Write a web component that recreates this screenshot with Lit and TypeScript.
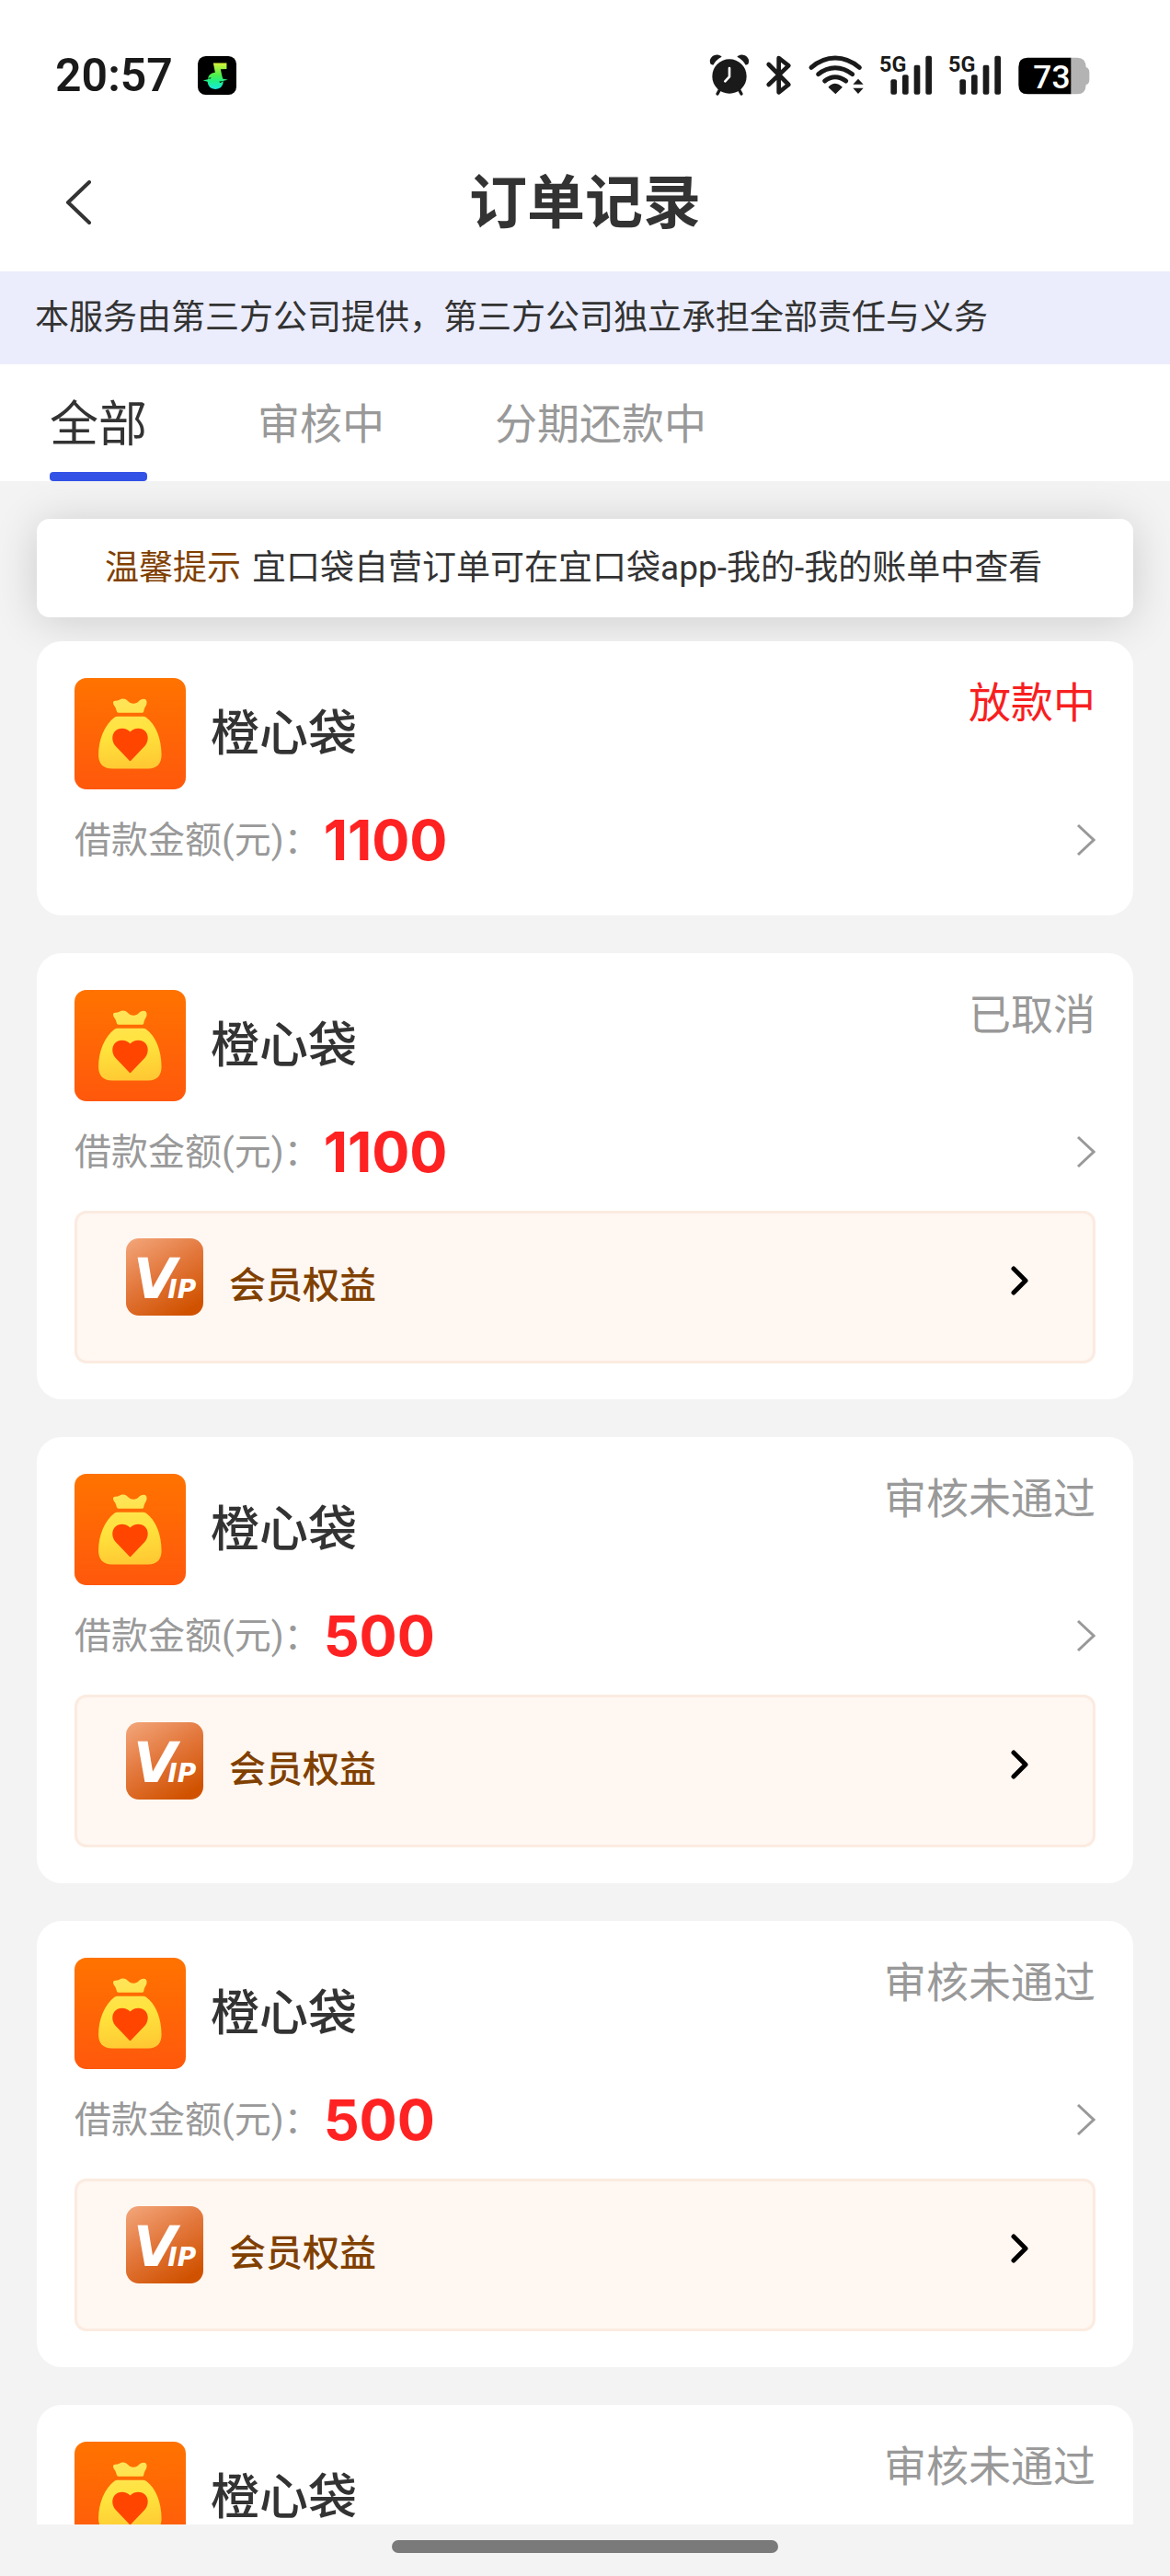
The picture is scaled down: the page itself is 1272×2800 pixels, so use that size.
import { LitElement, html, css, nothing } from "lit";
import { customElement, property, state } from "lit/decorators.js";
import { classMap } from "lit/directives/class-map.js";

interface Order {
  name: string;
  status: string;
  active: boolean;
  amount: number;
  benefit: boolean;
}

const ORDERS: Order[] = [
  { name: "橙心袋", status: "放款中", active: true, amount: 1100, benefit: false },
  { name: "橙心袋", status: "已取消", active: false, amount: 1100, benefit: true },
  { name: "橙心袋", status: "审核未通过", active: false, amount: 500, benefit: true },
  { name: "橙心袋", status: "审核未通过", active: false, amount: 500, benefit: true },
  { name: "橙心袋", status: "审核未通过", active: false, amount: 500, benefit: true },
];

const TABS = ["全部", "审核中", "分期还款中"];

@customElement("status-bar")
export class StatusBar extends LitElement {
  static styles = css`
    :host {
      display: block;
    }
    .bar {
      display: flex;
      align-items: center;
      justify-content: space-between;
      box-sizing: border-box;
      height: 146px;
      padding: 18px 87px 0 60px;
      color: #1a1a1a;
    }
    .left {
      display: flex;
      align-items: center;
      gap: 27px;
    }
    .right {
      display: flex;
      align-items: center;
      gap: 18px;
    }
    .time {
      font: 600 50px/56px "Roboto", sans-serif;
    }
    svg {
      display: block;
      overflow: visible;
      fill: currentColor;
    }
    .music {
      width: 42px;
      height: 42px;
    }
    .icon {
      height: 46px;
    }
    .net {
      font: 700 70px "Roboto", sans-serif;
    }
    .level {
      font: 500 106px "Roboto", sans-serif;
      fill: #fff;
    }
  `;

  private signal() {
    return html`<svg class="icon" width="57" viewBox="649 88 171 138" aria-hidden="true">
      <text class="net" x="646" y="145">5G</text>
      <rect x="683" y="170" width="20" height="49" rx="6" />
      <rect x="721" y="155" width="20" height="64" rx="6" />
      <rect x="759" y="123" width="20" height="96" rx="6" />
      <rect x="797" y="93" width="20" height="126" rx="6" />
    </svg>`;
  }

  render() {
    return html`<div class="bar">
      <div class="left">
        <span class="time">20:57</span>
        <svg class="music" viewBox="642 94 127 127" aria-hidden="true">
          <defs>
            <linearGradient id="note" x1="0" y1="0" x2="0" y2="1">
              <stop offset="0" stop-color="#d8f23a" />
              <stop offset=".45" stop-color="#4ef04a" />
              <stop offset=".7" stop-color="#1ff08a" />
              <stop offset="1" stop-color="#19e8e0" />
            </linearGradient>
          </defs>
          <rect x="642" y="94" width="127" height="127" rx="26" fill="#000" />
          <path
            fill="url(#note)"
            d="M693 117 L737 117 L737 136 L717 137 L724 168 L741 172 L727 175 Q724 202 700 203 Q676 201 674 178 L659 174 L675 170 Q677 150 699 148 Z"
          />
          <path d="M672 167 L686 164 L684 168 Z M712 178 L728 176 L716 182 Z" fill="#000" />
        </svg>
      </div>
      <div class="right">
        <svg class="icon" width="44" viewBox="92 88 132 138" aria-hidden="true">
          <circle cx="158" cy="160" r="56" />
          <path d="M105 123 L97 120 C88 104 104 88 122 90 Q130 91 133 96 Q114 106 105 123 Z" />
          <path d="M211 123 L219 120 C228 104 212 88 194 90 Q186 91 183 96 Q202 106 211 123 Z" />
          <path
            d="M126 204 L119 217 M190 204 L197 217"
            stroke="currentColor"
            stroke-width="10"
            stroke-linecap="round"
          />
          <path
            d="M158 133 V161 L144 176"
            fill="none"
            stroke="#fff"
            stroke-width="8"
            stroke-linecap="round"
            stroke-linejoin="round"
          />
        </svg>
        <svg class="icon" width="28" viewBox="283 88 84 138" aria-hidden="true">
          <path
            d="M291 121 L356 187 L324 212 V100 L356 125 L291 187"
            fill="none"
            stroke="currentColor"
            stroke-width="14"
            stroke-linecap="round"
            stroke-linejoin="round"
          />
        </svg>
        <svg class="icon" width="60" viewBox="421 88 180 138" aria-hidden="true">
          <g fill="none" stroke="currentColor" stroke-width="15" stroke-linecap="round">
            <path d="M430 131 Q466 100 508 100 Q550 100 587 131" />
            <path d="M453 153 Q478 132 508 132 Q538 132 564 153" />
            <path d="M474 175 Q490 162 508 162 Q526 162 543 175" />
          </g>
          <path
            d="M488 195 Q497 185 508 185 Q519 185 529 195 L509 215 Z"
            stroke="currentColor"
            stroke-width="4"
            stroke-linejoin="round"
          />
          <path d="M583 168 L600 186 H566 Z M583 217 L600 198 H566 Z" />
        </svg>
        ${this.signal()} ${this.signal()}
        <svg class="icon" width="78" viewBox="1100 88 234 138" role="img" aria-label="73%">
          <path
            d="M1271 99 H1293 Q1320 99 1321 130 Q1332 134 1332 147 V171 Q1332 184 1321 187 Q1320 218 1293 218 H1271 Z"
            fill="#b3b3b3"
          />
          <path d="M1130 99 H1272 V218 H1130 Q1101 218 1101 188 V129 Q1101 99 1130 99 Z" fill="#000" />
          <text class="level" x="1149" y="199">73</text>
        </svg>
      </div>
    </div>`;
  }
}

@customElement("order-card")
export class OrderCard extends LitElement {
  @property({ attribute: false }) order!: Order;

  static styles = css`
    :host {
      display: block;
    }
    .card {
      padding: 40px 41px 39px;
      border-radius: 27px;
      background: #fff;
    }
    .head {
      display: flex;
      align-items: center;
      gap: 27px;
    }
    .logo {
      display: block;
      width: 121px;
      height: 121px;
      border-radius: 13px;
    }
    .name {
      flex: 1;
      margin: 0;
      color: #333;
      font-size: 53px;
      line-height: 80px;
      font-weight: 500;
    }
    .status {
      align-self: flex-start;
      color: #999;
      font-size: 46px;
      line-height: 54px;
    }
    .status.active {
      color: #f81f1f;
    }
    .row {
      display: flex;
      align-items: center;
      height: 86px;
      margin-top: 12px;
      color: #999;
      text-decoration: none;
    }
    .label {
      padding-top: 2px;
      font-size: 40px;
      line-height: 60px;
    }
    .amount {
      flex: 1;
      padding-left: 3px;
      color: #ff2222;
      font: 700 61px/76px "Inter", sans-serif;
    }
    .more {
      display: block;
      width: 22px;
      height: 36px;
    }
    .benefit {
      display: flex;
      align-items: flex-start;
      gap: 28px;
      box-sizing: border-box;
      width: 100%;
      height: 166px;
      margin-top: 21px;
      padding: 27px 69px 0 53px;
      border: 3px solid #fbebe0;
      border-radius: 13px;
      background: #fff7f1;
      color: #804000;
      font: inherit;
      text-align: left;
    }
    .vip {
      display: block;
      width: 84px;
      height: 84px;
    }
    .benefit-name {
      flex: 1;
      font-size: 40px;
      line-height: 104px;
      font-weight: 500;
    }
    .open {
      display: block;
      width: 20px;
      height: 94px;
    }
    .v {
      font: italic 700 61px "DejaVu Sans", sans-serif;
      fill: #fff;
    }
    .ip {
      font-size: 28px;
    }
  `;

  private benefit() {
    return html`<button class="benefit" type="button">
      <svg class="vip" viewBox="0 0 84 84" aria-hidden="true">
        <defs>
          <linearGradient id="vip-bg" x1=".1" y1="0" x2=".7" y2="1">
            <stop offset="0" stop-color="#f2a377" />
            <stop offset=".5" stop-color="#e2763a" />
            <stop offset="1" stop-color="#d05200" />
          </linearGradient>
        </defs>
        <rect width="84" height="84" rx="14" fill="url(#vip-bg)" />
        <text class="v" x="8" y="65">V<tspan class="ip" dx="-10">IP</tspan></text>
      </svg>
      <span class="benefit-name">会员权益</span>
      <svg class="open" viewBox="0 0 20 94" aria-hidden="true">
        <path
          d="M3 33 L16 46 L3 59"
          fill="none"
          stroke="#000"
          stroke-width="5"
          stroke-linecap="round"
          stroke-linejoin="round"
        />
      </svg>
    </button>`;
  }

  render() {
    const o = this.order;
    return html`<article class="card">
      <div class="head">
        <svg class="logo" viewBox="64 48 362 362" aria-hidden="true">
          <defs>
            <linearGradient id="bg" x1="0" y1="0" x2="0" y2="1">
              <stop offset="0" stop-color="#ff7300" />
              <stop offset="1" stop-color="#ff580c" />
            </linearGradient>
            <linearGradient id="bag" gradientUnits="userSpaceOnUse" x1="230" y1="115" x2="260" y2="343">
              <stop offset="0" stop-color="#ffe45a" />
              <stop offset=".5" stop-color="#ffe33c" />
              <stop offset="1" stop-color="#ffc833" />
            </linearGradient>
          </defs>
          <rect x="64" y="48" width="362" height="362" fill="url(#bg)" />
          <path
            fill="url(#bag)"
            d="M190 131 Q188 122 197 122 C208 122 212 115 222 115 C237 115 240 131 256 131 C272 131 274 116 289 116 Q299 117 299 127 C299 138 292 140 289 157 Q288 161 284 161 H207 Q202 161 201 156 C199 142 192 139 190 131 Z"
          />
          <path
            fill="url(#bag)"
            d="M204 173 H287 Q292 173 297 176 C328 198 347 245 347 298 C347 327 331 343 304 343 H186 C158 343 142 327 142 298 C142 247 163 200 193 177 Q198 173 204 173 Z"
          />
          <path
            fill="#ff4500"
            d="M245 318 Q243 318 239 313 L197 269 C182 251 185 224 204 215 C220 208 236 214 245 223 C254 214 270 208 286 215 C305 224 308 251 293 269 L251 313 Q247 318 245 318 Z"
          />
        </svg>
        <h2 class="name">${o.name}</h2>
        <span class=${classMap({ status: true, active: o.active })}>${o.status}</span>
      </div>
      <a class="row" href="#order">
        <span class="label">借款金额(元)：</span>
        <span class="amount">${o.amount}</span>
        <svg class="more" viewBox="0 0 22 36" aria-hidden="true">
          <path d="M3 2 L20 18 L3 34" fill="none" stroke="#999" stroke-width="3" />
        </svg>
      </a>
      ${o.benefit ? this.benefit() : nothing}
    </article>`;
  }
}

@customElement("app-root")
export class AppRoot extends LitElement {
  @state() private tab = 0;

  static styles = css`
    :host {
      display: flex;
      flex-direction: column;
      height: 100vh;
      background: #fff;
      color: #333;
      font-family: "Roboto", "Noto Sans CJK SC", sans-serif;
    }
    .nav {
      display: grid;
      grid-template-columns: 60px 1fr 60px;
      align-items: center;
      height: 149px;
      padding: 0 56px;
    }
    .back {
      display: grid;
      place-items: center;
      width: 60px;
      height: 80px;
      padding: 0;
      border: 0;
      background: none;
    }
    .title {
      margin: 0;
      text-align: center;
      font-size: 63px;
      line-height: 92px;
      font-weight: 700;
    }
    .banner {
      margin: 0;
      padding: 23px 38px 22px;
      background: #ebedfc;
      font-size: 37px;
      line-height: 56px;
    }
    .tabs {
      display: flex;
      gap: 120px;
      padding: 0 54px;
    }
    .tab {
      position: relative;
      height: 127px;
      padding: 0 0 6px;
      border: 0;
      background: none;
      color: #999;
      font: inherit;
      font-size: 46px;
    }
    .tab.on {
      color: #333;
      font-size: 53px;
    }
    .tab.on::after {
      content: "";
      position: absolute;
      right: 0;
      bottom: 0;
      left: 0;
      height: 10px;
      border-radius: 4px;
      background: #3352e6;
    }
    .list {
      display: flex;
      flex: 1;
      flex-direction: column;
      gap: 41px;
      min-height: 0;
      padding: 41px 40px 0;
      overflow: hidden auto;
      scrollbar-width: none;
      background: #f3f3f3;
    }
    .notice {
      display: flex;
      gap: 12px;
      margin: 0 0 -15px;
      padding: 26px 74px 25px;
      border-radius: 14px;
      background: #fff;
      box-shadow: 0 4px 48px rgba(0, 0, 0, 0.16);
      font-size: 37px;
      line-height: 56px;
    }
    .tip {
      color: #804000;
    }
    .home {
      display: grid;
      justify-items: center;
      align-content: center;
      height: 48px;
      padding-bottom: 8px;
      background: #f3f3f3;
    }
    .pill {
      width: 33%;
      height: 14px;
      border-radius: 7px;
      background: #7a7a7a;
    }
  `;

  render() {
    return html`
      <status-bar></status-bar>
      <header class="nav">
        <button class="back" type="button" aria-label="返回">
          <svg width="30" height="50" viewBox="0 0 30 50" aria-hidden="true">
            <path
              d="M26 2 L3 24 L26 46"
              fill="none"
              stroke="#333"
              stroke-width="4"
              stroke-linecap="round"
              stroke-linejoin="round"
            />
          </svg>
        </button>
        <h1 class="title">订单记录</h1>
      </header>
      <p class="banner">本服务由第三方公司提供，第三方公司独立承担全部责任与义务</p>
      <nav class="tabs">
        ${TABS.map(
          (t, i) => html`<button
            type="button"
            class=${classMap({ tab: true, on: i === this.tab })}
            @click=${() => (this.tab = i)}
          >
            ${t}
          </button>`,
        )}
      </nav>
      <main class="list">
        <div class="notice">
          <span class="tip">温馨提示</span>
          <span>宜口袋自营订单可在宜口袋app-我的-我的账单中查看</span>
        </div>
        ${ORDERS.map((o) => html`<order-card .order=${o}></order-card>`)}
      </main>
      <div class="home"><div class="pill"></div></div>
    `;
  }
}
